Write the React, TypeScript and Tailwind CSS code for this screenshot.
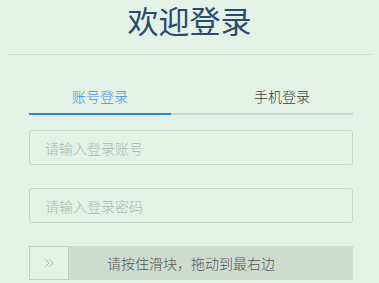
import { useState } from "react";

const font = { fontFamily: '"Noto Sans CJK SC", "Noto Sans", sans-serif' };

export default function App() {
    const [tab, setTab] = useState(0);

    return (
        <div className="min-h-screen w-full bg-[#e2f2e6]" style={font}>
            {/* Title */}
            <div className="mx-[8px] h-[55px] border-b border-[#cadccf] pt-[1px] text-center">
                <h1 className="text-[31px] leading-[38px] font-normal text-[#2b4a6b]">欢迎登录</h1>
            </div>

            <div className="mx-[29px] mt-[23px] w-[324px]">
                {/* Tabs */}
                <div className="flex border-b-2 border-[#c9d6cd]">
                    <button
                        onClick={() => setTab(0)}
                        className={
                            "-mb-[2px] w-[142px] border-b-2 pt-[8px] pb-[7px] text-center text-[14px] leading-[20px] font-light " +
                            (tab === 0 ? "border-[#2a8ad6] text-[#3f95de]" : "border-transparent text-[#3c3c3c]")
                        }
                    >
                        账号登录
                    </button>
                    <button
                        onClick={() => setTab(1)}
                        className={
                            "-mb-[2px] flex-1 border-b-2 pt-[8px] pb-[7px] pl-[40px] text-center text-[14px] leading-[20px] font-light " +
                            (tab === 1 ? "border-[#2a8ad6] text-[#3f95de]" : "border-transparent text-[#3c3c3c]")
                        }
                    >
                        手机登录
                    </button>
                </div>

                {/* Inputs */}
                <input
                    className="mt-[15px] block h-[35px] w-full rounded-[3px] border border-[#c4d8ca] bg-transparent pl-[15px] text-[14px] font-light text-[#333] outline-none placeholder:text-[#a9b8ad]"
                    placeholder="请输入登录账号"
                />
                <input
                    type="password"
                    className="mt-[23px] block h-[35px] w-full rounded-[3px] border border-[#c4d8ca] bg-transparent pl-[15px] text-[14px] font-light text-[#333] outline-none placeholder:text-[#a9b8ad]"
                    placeholder="请输入登录密码"
                />

                {/* Slider verify */}
                <div className="relative mt-[23px] flex h-[34px] w-full items-center justify-center bg-[#cddccf]">
                    <div className="absolute top-0 left-0 flex h-[34px] w-[40px] items-center justify-center border border-[#bfd0c3] bg-[#e2f2e6]">
                        <svg width="11" height="10" viewBox="0 0 11 10" fill="none" stroke="#adbdb1" strokeWidth="1">
                            <polyline points="1,1 5,5 1,9" />
                            <polyline points="5,1 9,5 5,9" />
                        </svg>
                    </div>
                    <span className="text-[14px] font-light text-[#555]">请按住滑块，拖动到最右边</span>
                </div>
            </div>
        </div>
    );
}
